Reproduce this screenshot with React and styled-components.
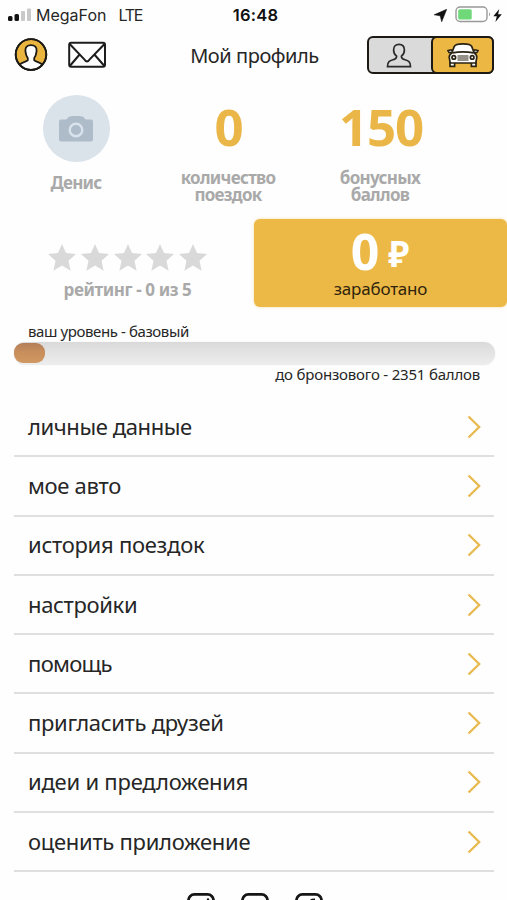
import styled, { createGlobalStyle } from "styled-components";

const GlobalStyle = createGlobalStyle`
  * {
    box-sizing: border-box;
  }
  body {
    margin: 0;
    background: #fefefe;
    font-family: "Noto Sans", "Open Sans", sans-serif;
    color: #262626;
  }
`;

const Screen = styled.main`
  width: 507px;
  height: 900px;
  overflow: hidden;
  background: #fefefe;
`;

const StatusBar = styled.div`
  display: grid;
  grid-template-columns: 1fr auto 1fr;
  align-items: center;
  height: 30px;
  padding: 0 5px 0 8px;
  font-family: Inter, sans-serif;
  font-size: 16px;
  line-height: 30px;
`;

const Carrier = styled.div`
  display: flex;
  align-items: center;
  gap: 4px;
`;

const Network = styled.span`
  margin-left: 8px;
  letter-spacing: -1.3px;
`;

const Clock = styled.div`
  padding-left: 1px;
  font-size: 16.5px;
  font-weight: 600;
  letter-spacing: 0.2px;
  color: #111;
`;

const StatusIcons = styled.div`
  display: flex;
  justify-content: flex-end;
  align-items: center;
`;

const Header = styled.header`
  display: grid;
  grid-template-columns: 1fr auto 1fr;
  align-items: center;
  height: 50px;
  padding: 0 13px 0 14px;
`;

const HeaderIcons = styled.div`
  display: flex;
  align-items: center;
  gap: 19px;
`;

const Title = styled.h1`
  margin: 0;
  padding: 2px 0 0 1px;
  font-size: 20px;
  font-weight: 400;
  line-height: 48px;
  letter-spacing: -0.45px;
`;

const Toggle = styled.div`
  display: flex;
  justify-self: end;
  width: 127px;
  height: 38px;
  border: 2px solid #1d1a16;
  border-radius: 6px;
  background: #dadada;
`;

const ToggleItem = styled.div`
  flex: ${(props) => (props.$active ? "none" : "1")};
  display: flex;
  align-items: center;
  justify-content: center;
  width: 63px;
  margin: -2px;
  padding-right: ${(props) => (props.$active ? "0" : "4px")};
  border: 2px solid ${(props) => (props.$active ? "#1d1a16" : "transparent")};
  border-radius: 6px;
  background: ${(props) => (props.$active ? "#ecb843" : "transparent")};
`;

const Stats = styled.section`
  display: grid;
  grid-template-columns: 152px 152px 152px;
  height: 139px;
  padding-top: 15px;
`;

const Stat = styled.div`
  display: flex;
  flex-direction: column;
  align-items: center;
`;

const Avatar = styled.div`
  display: flex;
  align-items: center;
  justify-content: center;
  width: 67px;
  height: 67px;
  border-radius: 50%;
  background: #dae2ea;
`;

const Value = styled.div`
  height: 74px;
  padding-left: 2px;
  font-size: 51px;
  font-weight: 700;
  line-height: 63px;
  letter-spacing: ${(props) => props.$spacing || "0"};
  color: #eab647;
`;

const Caption = styled.div`
  margin-top: ${(props) => props.$top || "0"};
  font-size: 17px;
  font-weight: 700;
  line-height: 17px;
  letter-spacing: ${(props) => props.$spacing || "-0.7px"};
  text-align: center;
  white-space: nowrap;
  color: #a9a9a9;
`;

const Summary = styled.section`
  display: flex;
  height: 88px;
`;

const Rating = styled.div`
  display: flex;
  flex-direction: column;
  align-items: center;
  width: 254px;
  padding: 25px 0 0 1px;
`;

const Stars = styled.div`
  display: flex;
  gap: 4.8px;
`;

const Earned = styled.div`
  display: flex;
  flex-direction: column;
  align-items: center;
  width: 253px;
  border-radius: 6px;
  background: #ecb946;
  box-shadow: 0 0 3px rgba(236, 185, 70, 0.5);
`;

const Amount = styled.div`
  display: flex;
  align-items: flex-start;
  gap: 9px;
  height: 60px;
  margin-right: 1px;
  font-size: 50px;
  font-weight: 700;
  line-height: 64px;
  color: #fff;
`;

const Ruble = styled.span`
  padding-top: 3px;
  font-size: 35px;
`;

const EarnedLabel = styled.div`
  font-size: 17px;
  line-height: 20px;
  letter-spacing: -0.2px;
  color: #30240d;
`;

const Level = styled.section`
  height: 91px;
  padding: 14px 12px 0 14px;
`;

const LevelText = styled.div`
  height: 21px;
  padding: 0 15px 0 14px;
  font-size: 15px;
  line-height: ${(props) => props.$lineHeight || "20px"};
  letter-spacing: ${(props) => props.$spacing};
  text-align: ${(props) => props.$align || "left"};
`;

const Track = styled.div`
  height: 23px;
  padding-top: 1px;
  border-radius: 11px;
  background: linear-gradient(#d9d9d9, #e1e1e1 35%, #ededed);
  box-shadow: 0 0 2px #eee;
`;

const Progress = styled.div`
  width: 31px;
  height: 20px;
  border-radius: 9px;
  background: linear-gradient(#b37e58, #c88e5c 45%, #d09862);
`;

const Menu = styled.ul`
  margin: 0;
  padding: 0 13px 0 14px;
  list-style: none;
`;

const MenuItem = styled.li`
  display: flex;
  align-items: center;
  justify-content: space-between;
  height: 59.3px;
  padding: 0 13px 0 14px;
  border-bottom: 2px solid #dfdfdf;
`;

const MenuLabel = styled.span`
  padding-bottom: 2px;
  font-size: 22px;
  letter-spacing: ${(props) => props.$spacing};
`;

const Socials = styled.footer`
  display: flex;
  justify-content: center;
  gap: 26px;
  padding: 20px 0 0 2px;
`;

const menu = [
  ["личные данные", "-0.4px"],
  ["мое авто", "-0.3px"],
  ["история поездок", "-0.27px"],
  ["настройки", "-0.33px"],
  ["помощь", "-0.7px"],
  ["пригласить друзей", "-0.3px"],
  ["идеи и предложения", "-0.22px"],
  ["оценить приложение", "-0.28px"],
];

const Signal = () => (
  <svg width="24" height="14" viewBox="0 0 24 14">
    <rect x="0" y="8" width="4.5" height="5" rx="1.5" fill="#111" />
    <rect x="6.5" y="6" width="4.5" height="7" rx="1.5" fill="#111" />
    <rect x="13" y="3" width="4" height="10" rx="1" fill="#c9c9c9" />
    <rect x="19" y="0.5" width="4" height="12.5" rx="1" fill="#c9c9c9" />
  </svg>
);

const Location = () => (
  <svg width="13" height="13" viewBox="0 0 13 13">
    <path d="M12.7 0.3 L7.7 12.7 L6.2 6.8 L0.2 5.8 Z" fill="#111" stroke="#111" strokeWidth="0.6" />
  </svg>
);

const BatteryIcon = styled.svg`
  margin: 0 1px 1px 8px;
`;

const Battery = () => (
  <BatteryIcon width="37" height="17" viewBox="0 0 37 17">
    <rect x="1" y="1" width="31" height="14.5" rx="4" fill="#fff" stroke="#999" strokeWidth="1.4" />
    <rect x="3.2" y="3.2" width="13.5" height="10.2" rx="1.5" fill="#6fd879" />
    <path d="M34 6 Q36 8.3 34 10.5 Z" fill="#999" />
  </BatteryIcon>
);

const Bolt = () => (
  <svg width="9" height="13" viewBox="0 0 9 13">
    <path d="M6.3 0 L0.3 7.2 L3.8 7.2 L2.4 13 L8.8 5.3 L5.1 5.3 Z" fill="#111" />
  </svg>
);

const ProfileIcon = () => (
  <svg width="34" height="34" viewBox="0 0 34 34" fill="#fff" stroke="#1d1a16" strokeWidth="1.8">
    <circle cx="17" cy="16.5" r="15.3" fill="#eab53f" />
    <path d="M5.6 26.6 C8 23.8 12.4 24 13.8 22.3 L13.8 20 C12.2 18.3 11.8 16 11.4 13 C11 9 13.3 7.2 17 7.2 C20.7 7.2 23 9 22.6 13 C22.2 16 21.8 18.3 20.2 20 L20.2 22.3 C21.6 24 26 23.8 28.4 26.6 C25.5 30 21.5 31.8 17 31.8 C12.5 31.8 8.5 30 5.6 26.6 Z" />
    <circle cx="17" cy="16.5" r="15.3" fill="none" />
  </svg>
);

const MailIcon = () => (
  <svg width="40" height="28" viewBox="0 0 40 28" fill="none" stroke="#1d1d1d" strokeWidth="2">
    <rect x="2.2" y="1.7" width="35.8" height="24" rx="2" />
    <path d="M2.7 3 L16.8 17.8 Q20 23 23.2 17.8 L37.5 3 M2.8 25 L12.6 13.5 M37.4 25 L27.4 13.5" />
  </svg>
);

const PersonIcon = () => (
  <svg width="28" height="27" viewBox="0 0 28 27" fill="none" stroke="#2a2a2a" strokeWidth="1.7">
    <path d="M2.5 24.6 C2.3 19.5 5 18.6 8 17.8 C10.8 17 11.6 16.2 11.6 14.2 C9.4 12.6 8.6 10.6 8.6 8 C8.6 4.2 10.6 2.3 14 2.3 C17.4 2.3 19.4 4.2 19.4 8 C19.4 10.6 18.6 12.6 16.4 14.2 C16.4 16.2 17.2 17 20 17.8 C23 18.6 25.7 19.5 25.5 24.6 Z" />
  </svg>
);

const CarIcon = () => (
  <svg width="32" height="26" viewBox="0 0 32 26" fill="#fff" stroke="#2a2212" strokeWidth="1.7">
    <path d="M3 20 L3 24.4 L7.6 24.4 L7.6 20 M24.4 20 L24.4 24.4 L29 24.4 L29 20" />
    <path d="M5.6 10.6 L2 10.4 L1 8.6 L4 7.8 L6 9 M26.4 10.6 L30 10.4 L31 8.6 L28 7.8 L26 9" />
    <path d="M4.8 11 L7.2 4.6 Q8.2 1.8 16 1.8 Q23.8 1.8 24.8 4.6 L27.2 11 Q29.8 12.5 29.8 15.3 L28.8 21 L3.2 21 L2.2 15.3 Q2.2 12.5 4.8 11 Z" />
    <path d="M5.4 10.8 Q16 8.8 26.6 10.8" fill="none" />
    <circle cx="6.8" cy="15.4" r="1.8" />
    <circle cx="25.2" cy="15.4" r="1.8" />
    <path d="M10.5 14 H21.5 M10.5 16 H21.5 M10.5 18 H21.5" strokeWidth="1" />
  </svg>
);

const CameraIcon = () => (
  <svg width="34" height="27" viewBox="0 0 34 27">
    <path
      d="M2 4.5 H6.8 Q8 4.3 8.8 3 Q9.5 1.6 11 1.6 L14 1 H20 L23 1.6 Q24.5 1.6 25.2 3 Q26 4.3 27.2 4.5 H32 Q34 4.5 34 6.5 V24.5 Q34 26.5 32 26.5 H2 Q0 26.5 0 24.5 V6.5 Q0 4.5 2 4.5 Z"
      fill="#aebbc8"
    />
    <circle cx="17" cy="15" r="6.3" fill="none" stroke="#d9e3ed" strokeWidth="2.4" />
  </svg>
);

const Star = () => (
  <svg width="28" height="27" viewBox="0 0 28 27">
    <path
      d="M14 0 L18 9 L28 10 L20.5 16.7 L22.6 26.7 L14 21.6 L5.4 26.7 L7.5 16.7 L0 10 L10 9 Z"
      fill="#d9d9d9"
    />
  </svg>
);

const Chevron = () => (
  <svg width="14" height="24" viewBox="0 0 14 24" fill="none" stroke="#e8b94f" strokeWidth="2.3">
    <path d="M1.5 1.5 L12.2 12 L1.5 22.5" />
  </svg>
);

const SocialIcon = ({ children }) => (
  <svg width="28" height="28" viewBox="0 0 28 28" fill="none" stroke="#161616" strokeWidth="2.8">
    <rect x="1.4" y="2.4" width="25.2" height="25.2" rx="6" />
    {children}
  </svg>
);

export default function App() {
  return (
    <>
      <GlobalStyle />
      <Screen>
        <StatusBar>
          <Carrier>
            <Signal />
            <span>MegaFon</span>
            <Network>LTE</Network>
          </Carrier>
          <Clock>16:48</Clock>
          <StatusIcons>
            <Location />
            <Battery />
            <Bolt />
          </StatusIcons>
        </StatusBar>
        <Header>
          <HeaderIcons>
            <ProfileIcon />
            <MailIcon />
          </HeaderIcons>
          <Title>Мой профиль</Title>
          <Toggle>
            <ToggleItem>
              <PersonIcon />
            </ToggleItem>
            <ToggleItem $active>
              <CarIcon />
            </ToggleItem>
          </Toggle>
        </Header>
        <Stats>
          <Stat>
            <Avatar>
              <CameraIcon />
            </Avatar>
            <Caption $top="12px">Денис</Caption>
          </Stat>
          <Stat>
            <Value>0</Value>
            <Caption>
              количество
              <br />
              поездок
            </Caption>
          </Stat>
          <Stat>
            <Value $spacing="-1.2px">150</Value>
            <Caption>
              бонусных
              <br />
              баллов
            </Caption>
          </Stat>
        </Stats>
        <Summary>
          <Rating>
            <Stars>
              {[1, 2, 3, 4, 5].map((n) => (
                <Star key={n} />
              ))}
            </Stars>
            <Caption $top="10px" $spacing="-0.4px">
              рейтинг - 0 из 5
            </Caption>
          </Rating>
          <Earned>
            <Amount>
              0<Ruble>₽</Ruble>
            </Amount>
            <EarnedLabel>заработано</EarnedLabel>
          </Earned>
        </Summary>
        <Level>
          <LevelText $spacing="-0.4px">ваш уровень - базовый</LevelText>
          <Track>
            <Progress />
          </Track>
          <LevelText $spacing="-0.2px" $lineHeight="18px" $align="right">
            до бронзового - 2351 баллов
          </LevelText>
        </Level>
        <Menu>
          {menu.map(([label, spacing]) => (
            <MenuItem key={label}>
              <MenuLabel $spacing={spacing}>{label}</MenuLabel>
              <Chevron />
            </MenuItem>
          ))}
        </Menu>
        <Socials>
          <SocialIcon>
            <circle cx="21" cy="7.5" r="1.2" fill="#161616" stroke="none" />
          </SocialIcon>
          <SocialIcon />
          <SocialIcon>
            <path d="M15 9 Q16 7.4 20 7.4" strokeWidth="1.6" />
          </SocialIcon>
        </Socials>
      </Screen>
    </>
  );
}
